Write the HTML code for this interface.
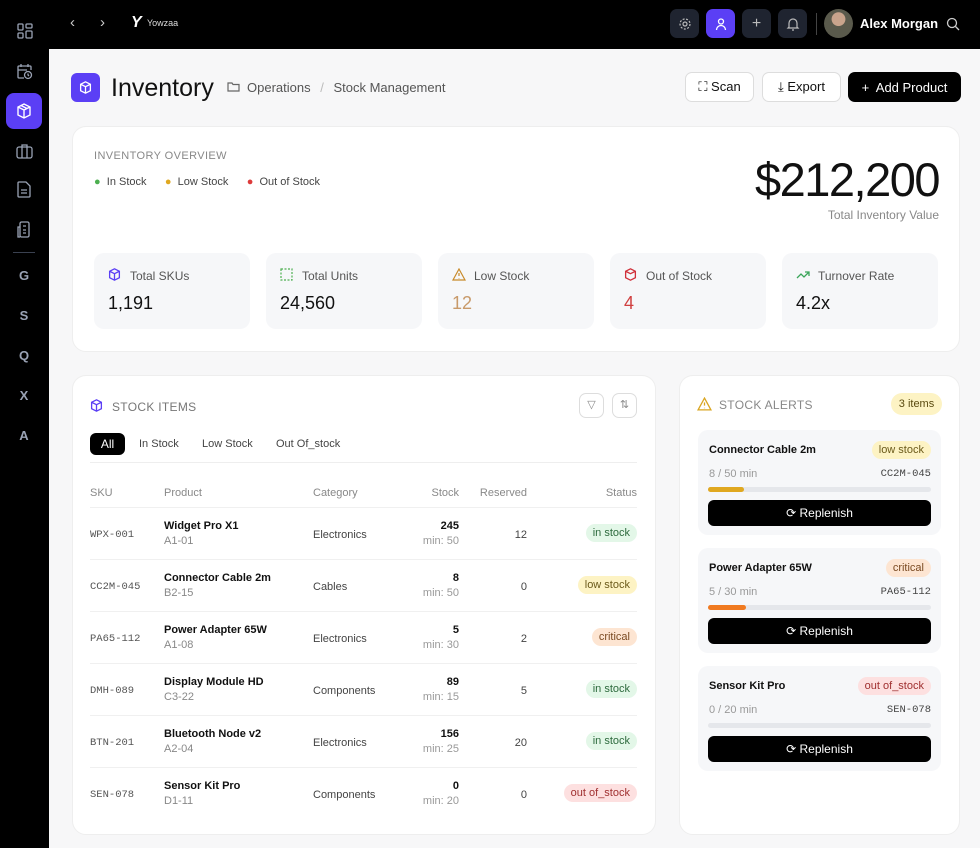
<!DOCTYPE html>
<html><head><meta charset="utf-8"><style>
*{box-sizing:border-box;margin:0;padding:0}
body{width:980px;height:848px;overflow:hidden;background:#f7f7f8;font-family:"Liberation Sans",sans-serif;color:#111;position:relative}
.side{position:absolute;left:0;top:0;width:49px;height:848px;background:#000}
.top{position:absolute;left:0;top:0;width:980px;height:49px;background:#000}
.si{position:absolute;left:6px;width:36px;height:36px;display:flex;align-items:center;justify-content:center;color:#9aa3b5;font-weight:bold;font-size:13px}
.abs{position:absolute}
.card{position:absolute;background:#fff;border-radius:14px;border:1px solid #eee}
.stat{position:absolute;top:253px;width:156px;height:76px;background:#f6f7f9;border-radius:10px}
.stat .l{position:absolute;left:36px;top:16px;font-size:12px;color:#555}
.stat .v{position:absolute;left:14px;top:40px;font-size:18px;color:#111}
.stat svg{position:absolute;left:14px;top:15px}
.btn{position:absolute;top:72px;height:30px;border-radius:7px;font-size:13px;display:flex;align-items:center;justify-content:center;gap:8px}
.tb{position:absolute;top:9px;width:29px;height:29px;border-radius:7px;background:#1f2430;display:flex;align-items:center;justify-content:center}
.row{position:absolute;left:90px;width:547px;height:52px;border-top:1px solid #f0f0f0;font-size:11px}
.row>*{position:absolute}
.sku{left:0;top:21px;font-family:"Liberation Mono",monospace;color:#555;font-size:10.5px}
.pn{left:74px;top:12px;font-weight:bold;color:#111;font-size:11px}
.pl{left:74px;top:27px;color:#888}
.cat{left:223px;top:21px;color:#444}
.st{right:178px;top:12px;text-align:right;font-weight:bold}
.st span{display:block;font-weight:normal;color:#999;margin-top:3px}
.rs{right:110px;top:21px;color:#444}
.bd{right:0;top:16px;padding:3px 7px;border-radius:9px;font-size:11px}
.g{background:#e3f7e8;color:#2d6a3d}.y{background:#fdf3c4;color:#6b5a1a}.o{background:#fde5d2;color:#7a4a22}.r{background:#fde0e0;color:#a03030}
.al{position:absolute;left:698px;width:243px;height:105px;background:#f6f7f9;border-radius:10px}
.al .n{position:absolute;left:11px;top:14px;font-weight:bold;font-size:11px}
.al .b{position:absolute;right:10px;top:11px;padding:3px 7px;border-radius:9px;font-size:11px}
.al .m{position:absolute;left:11px;top:38px;font-size:11px;color:#999}
.al .c{position:absolute;right:10px;top:38px;font-size:10.5px;color:#444;font-family:"Liberation Mono",monospace}
.al .bar{position:absolute;left:10px;right:10px;top:57px;height:5px;border-radius:3px;background:#e5e7eb}
.al .bar i{display:block;height:5px;border-radius:3px}
.al .rp{position:absolute;left:10px;right:10px;top:70px;height:26px;background:#000;color:#fff;border-radius:6px;font-size:12px;display:flex;align-items:center;justify-content:center;gap:6px}
</style></head><body>
<div class="top"></div>
<div class="side"></div>
<svg class="abs" style="left:17px;top:23px" width="16" height="16" viewBox="0 0 16 16" fill="none" stroke="#9aa3b5" stroke-width="1.3"><rect x="1" y="1" width="5" height="6" rx="1"/><rect x="9" y="1" width="6" height="4" rx="1"/><rect x="1" y="10" width="5" height="5" rx="1"/><rect x="9" y="8" width="6" height="7" rx="1"/></svg>
<svg class="abs" style="left:16px;top:63px" width="17" height="17" viewBox="0 0 17 17" fill="none" stroke="#9aa3b5" stroke-width="1.3"><path d="M8 15H3a1 1 0 0 1-1-1V4a1 1 0 0 1 1-1h11a1 1 0 0 1 1 1v3M2 7h9M5 1v3M12 1v3"/><circle cx="12" cy="12" r="3.5"/><path d="M12 10.5V12l1 1"/></svg>
<div class="abs" style="left:6px;top:93px;width:36px;height:36px;border-radius:8px;background:#5b3ff5"></div>
<svg class="abs" style="left:16px;top:103px" width="16" height="16" viewBox="0 0 16 16" fill="none" stroke="#fff" stroke-width="1.4"><path d="M8 1l6 3v8l-6 3-6-3V4z M2 4l6 3 6-3M8 7v8M5 2.5l6 3"/></svg>
<svg class="abs" style="left:16px;top:143px" width="17" height="16" viewBox="0 0 17 16" fill="none" stroke="#9aa3b5" stroke-width="1.3"><rect x="1" y="4" width="15" height="11" rx="2"/><path d="M6 4V2h5v2M6 4v11M11 4v11"/></svg>
<svg class="abs" style="left:17px;top:181px" width="14" height="17" viewBox="0 0 14 17" fill="none" stroke="#9aa3b5" stroke-width="1.3"><path d="M2 1h7l4 4v10a1 1 0 0 1-1 1H2a1 1 0 0 1-1-1V2a1 1 0 0 1 1-1zM4 9h6M4 12h6"/></svg>
<svg class="abs" style="left:16px;top:221px" width="16" height="17" viewBox="0 0 16 17" fill="none" stroke="#9aa3b5" stroke-width="1.3"><rect x="4" y="1" width="9" height="15" rx="1.5"/><path d="M4 6H2v10h2M7 5h3M7 9h3M7 12h3"/></svg>
<div class="abs" style="left:13px;top:252px;width:22px;height:1px;background:#3a4150"></div>
<div class="si" style="top:257px">G</div><div class="si" style="top:297px">S</div><div class="si" style="top:337px">Q</div><div class="si" style="top:377px">X</div><div class="si" style="top:417px">A</div>

<div class="abs" style="left:70px;top:14px;color:#ccc;font-size:15px">‹</div>
<div class="abs" style="left:100px;top:14px;color:#ccc;font-size:15px">›</div>
<div class="abs" style="left:131px;top:14px;color:#fff;font-weight:bold;font-size:16px;font-style:italic">Y</div>
<div class="abs" style="left:147px;top:18px;color:#ddd;font-size:9px">Yowzaa</div>

<div class="tb" style="left:670px"><svg width="14" height="14" viewBox="0 0 14 14" fill="none" stroke="#bbb" stroke-width="1.2"><circle cx="7" cy="7" r="2"/><circle cx="7" cy="7" r="5" stroke-dasharray="2 1.5"/></svg></div>
<div class="tb" style="left:706px;background:#5b3ff5"><svg width="14" height="14" viewBox="0 0 14 14" fill="none" stroke="#fff" stroke-width="1.3"><circle cx="7" cy="4.5" r="2.5"/><path d="M2.5 13a4.5 4.5 0 0 1 9 0"/></svg></div>
<div class="tb" style="left:742px;color:#bbb;font-size:16px">+</div>
<div class="tb" style="left:778px"><svg width="14" height="14" viewBox="0 0 14 14" fill="none" stroke="#bbb" stroke-width="1.2"><path d="M3 10V6a4 4 0 0 1 8 0v4l1 1H2zM6 13h2"/></svg></div>
<div class="abs" style="left:816px;top:13px;width:1px;height:22px;background:#444"></div>
<div class="abs" style="left:824px;top:9px;width:29px;height:29px;border-radius:50%;background:radial-gradient(circle at 50% 35%,#c9a48c 0 28%,#5a5a4c 30% 100%)"></div>
<div class="abs" style="left:860px;top:16px;color:#fff;font-weight:bold;font-size:13px">Alex Morgan</div>
<svg class="abs" style="left:946px;top:17px" width="14" height="14" viewBox="0 0 14 14" fill="none" stroke="#ccc" stroke-width="1.3"><circle cx="6" cy="6" r="4.5"/><path d="M9.5 9.5L13 13"/></svg>

<div class="abs" style="left:71px;top:73px;width:29px;height:29px;border-radius:6px;background:#5b3ff5"></div>
<svg class="abs" style="left:79px;top:81px" width="13" height="13" viewBox="0 0 16 16" fill="none" stroke="#fff" stroke-width="1.6"><path d="M8 1l6 3v8l-6 3-6-3V4z M2 4l6 3 6-3M8 7v8"/></svg>
<div class="abs" style="left:111px;top:74px;font-size:25px;color:#111">Inventory</div>
<svg class="abs" style="left:227px;top:81px" width="13" height="11" viewBox="0 0 13 11" fill="none" stroke="#666" stroke-width="1.2"><path d="M1 2h4l1 1.5h6V10H1z"/></svg>
<div class="abs" style="left:247px;top:80px;font-size:13px;color:#555">Operations <span style="color:#bbb;margin:0 6px">/</span> Stock Management</div>
<div class="btn" style="left:685px;width:69px;background:#fff;border:1px solid #ddd">⛶ Scan</div>
<div class="btn" style="left:762px;width:79px;background:#fff;border:1px solid #ddd">⤓ Export</div>
<div class="btn" style="left:848px;width:113px;background:#000;color:#fff">+&nbsp; Add Product</div>

<div class="card" style="left:72px;top:126px;width:888px;height:226px"></div>
<div class="abs" style="left:94px;top:150px;font-size:11px;color:#888;letter-spacing:.4px">INVENTORY OVERVIEW</div>
<div class="abs" style="left:94px;top:176px;font-size:11px;color:#444"><span style="color:#4caf50">●</span>&nbsp; In Stock&nbsp;&nbsp;&nbsp;&nbsp;&nbsp; <span style="color:#e0a820">●</span>&nbsp; Low Stock&nbsp;&nbsp;&nbsp;&nbsp;&nbsp; <span style="color:#dd3b3b">●</span>&nbsp; Out of Stock</div>
<div class="abs" style="right:41px;top:152px;font-size:47px;font-weight:normal;letter-spacing:-1.5px;color:#111">$212,200</div>
<div class="abs" style="right:41px;top:208px;font-size:12px;color:#888">Total Inventory Value</div>
<div class="stat" style="left:94px"><svg width="13" height="13" viewBox="0 0 16 16" fill="none" stroke="#5b3ff5" stroke-width="1.6"><path d="M8 1l6 3v8l-6 3-6-3V4z M2 4l6 3 6-3M8 7v8"/></svg><div class="l">Total SKUs</div><div class="v">1,191</div></div>
<div class="stat" style="left:266px"><svg width="13" height="13" viewBox="0 0 13 13" fill="none" stroke="#4caf50" stroke-width="1.2" stroke-dasharray="2 1.5"><rect x="1" y="1" width="11" height="11"/></svg><div class="l">Total Units</div><div class="v">24,560</div></div>
<div class="stat" style="left:438px"><svg width="14" height="13" viewBox="0 0 14 13" fill="none" stroke="#c88a2a" stroke-width="1.2"><path d="M7 1l6 11H1zM7 5v3M7 10v.5"/></svg><div class="l">Low Stock</div><div class="v" style="color:#c89a6a">12</div></div>
<div class="stat" style="left:610px"><svg width="13" height="13" viewBox="0 0 16 16" fill="none" stroke="#d0303a" stroke-width="1.6"><path d="M8 1l6 3v8l-6 3-6-3V4z M2 4l6 3 6-3"/></svg><div class="l">Out of Stock</div><div class="v" style="color:#d04040">4</div></div>
<div class="stat" style="left:782px"><svg width="14" height="13" viewBox="0 0 14 13" fill="none" stroke="#3aa55a" stroke-width="1.3"><path d="M1 10l4-4 3 3 5-5M9 4h4v4"/></svg><div class="l">Turnover Rate</div><div class="v">4.2x</div></div>

<div class="card" style="left:72px;top:375px;width:584px;height:460px"></div>
<svg class="abs" style="left:90px;top:399px" width="13" height="13" viewBox="0 0 16 16" fill="none" stroke="#5b3ff5" stroke-width="1.6"><path d="M8 1l6 3v8l-6 3-6-3V4z M2 4l6 3 6-3M8 7v8"/></svg>
<div class="abs" style="left:112px;top:400px;font-size:12px;color:#777;letter-spacing:.3px">STOCK ITEMS</div>
<div class="abs" style="left:579px;top:393px;width:25px;height:25px;border:1px solid #ddd;border-radius:7px;text-align:center;line-height:23px;color:#888;font-size:11px">▽</div>
<div class="abs" style="left:612px;top:393px;width:25px;height:25px;border:1px solid #ddd;border-radius:7px;text-align:center;line-height:23px;color:#888;font-size:11px">⇅</div>
<div class="abs" style="left:90px;top:433px;width:35px;height:22px;border-radius:6px;background:#000;color:#fff;font-size:12px;text-align:center;line-height:22px">All</div>
<div class="abs" style="left:139px;top:438px;font-size:11px;color:#444">In Stock</div>
<div class="abs" style="left:202px;top:438px;font-size:11px;color:#444">Low Stock</div>
<div class="abs" style="left:276px;top:438px;font-size:11px;color:#444">Out Of_stock</div>
<div class="abs" style="left:90px;top:462px;width:547px;height:1px;background:#eee"></div>
<div class="abs" style="left:90px;top:487px;width:547px;font-size:11px;color:#888">
<span class="abs" style="left:0">SKU</span><span class="abs" style="left:74px">Product</span><span class="abs" style="left:223px">Category</span><span class="abs" style="right:178px">Stock</span><span class="abs" style="right:110px">Reserved</span><span class="abs" style="right:0">Status</span></div>
<div class="row" style="top:507px"><span class="sku">WPX-001</span><span class="pn">Widget Pro X1</span><span class="pl">A1-01</span><span class="cat">Electronics</span><span class="st">245<span>min: 50</span></span><span class="rs">12</span><span class="bd g">in stock</span></div>
<div class="row" style="top:559px"><span class="sku">CC2M-045</span><span class="pn">Connector Cable 2m</span><span class="pl">B2-15</span><span class="cat">Cables</span><span class="st">8<span>min: 50</span></span><span class="rs">0</span><span class="bd y">low stock</span></div>
<div class="row" style="top:611px"><span class="sku">PA65-112</span><span class="pn">Power Adapter 65W</span><span class="pl">A1-08</span><span class="cat">Electronics</span><span class="st">5<span>min: 30</span></span><span class="rs">2</span><span class="bd o">critical</span></div>
<div class="row" style="top:663px"><span class="sku">DMH-089</span><span class="pn">Display Module HD</span><span class="pl">C3-22</span><span class="cat">Components</span><span class="st">89<span>min: 15</span></span><span class="rs">5</span><span class="bd g">in stock</span></div>
<div class="row" style="top:715px"><span class="sku">BTN-201</span><span class="pn">Bluetooth Node v2</span><span class="pl">A2-04</span><span class="cat">Electronics</span><span class="st">156<span>min: 25</span></span><span class="rs">20</span><span class="bd g">in stock</span></div>
<div class="row" style="top:767px"><span class="sku">SEN-078</span><span class="pn">Sensor Kit Pro</span><span class="pl">D1-11</span><span class="cat">Components</span><span class="st">0<span>min: 20</span></span><span class="rs">0</span><span class="bd r">out of_stock</span></div>

<div class="card" style="left:679px;top:375px;width:281px;height:460px"></div>
<svg class="abs" style="left:697px;top:397px" width="15" height="14" viewBox="0 0 14 13" fill="none" stroke="#d9a520" stroke-width="1.2"><path d="M7 1l6 11H1zM7 5v3M7 10v.5"/></svg>
<div class="abs" style="left:719px;top:398px;font-size:12px;color:#888;letter-spacing:.3px">STOCK ALERTS</div>
<div class="abs" style="left:891px;top:393px;width:51px;height:22px;border-radius:11px;background:#fdf3c4;color:#5a4a10;font-size:11px;text-align:center;line-height:22px">3 items</div>
<div class="al" style="top:430px"><div class="n">Connector Cable 2m</div><div class="b y">low stock</div><div class="m">8 / 50 min</div><div class="c">CC2M-045</div><div class="bar"><i style="width:16%;background:#e0a820"></i></div><div class="rp">⟳ Replenish</div></div>
<div class="al" style="top:548px"><div class="n">Power Adapter 65W</div><div class="b o">critical</div><div class="m">5 / 30 min</div><div class="c">PA65-112</div><div class="bar"><i style="width:17%;background:#f07a20"></i></div><div class="rp">⟳ Replenish</div></div>
<div class="al" style="top:666px"><div class="n">Sensor Kit Pro</div><div class="b r">out of_stock</div><div class="m">0 / 20 min</div><div class="c">SEN-078</div><div class="bar"></div><div class="rp">⟳ Replenish</div></div>
</body></html>
